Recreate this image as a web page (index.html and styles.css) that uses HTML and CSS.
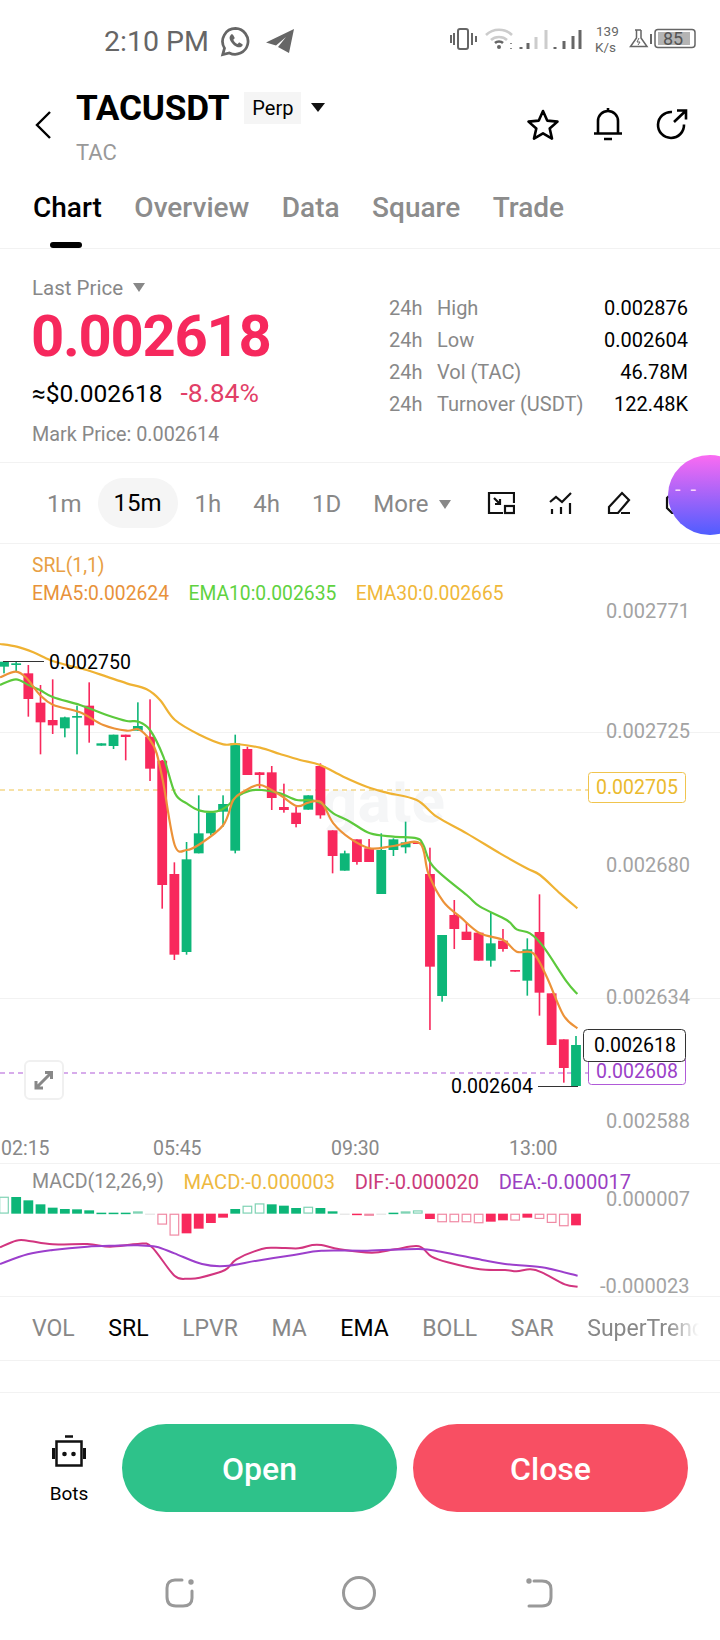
FILE: index.html
```html
<!DOCTYPE html>
<html lang="en">
<head>
  <meta charset="UTF-8">
  <meta name="viewport" content="width=device-width, initial-scale=1.0">
  <title>TACUSDT</title>
  <link rel="stylesheet" href="styles.css">
</head>
<body>
<div class="page">
  <div class="status-bar">
    <span class="clock">2:10 PM</span>
    <svg class="icon-whatsapp" viewBox="0 0 24 24" fill="none">
      <path d="M12 2.5a9.4 9.4 0 0 0-8 14.3L2.7 21.5l4.8-1.2A9.4 9.4 0 1 0 12 2.5z" stroke="#666" stroke-width="2"/>
      <path d="M8.6 7.2c-.7.6-1.1 1.6-.8 2.9.6 2.4 3.5 5.4 5.9 6 1.4.4 2.5 0 3.2-.8.4-.4.4-1 .1-1.3l-1.8-1.1c-.3-.2-.7-.1-1 .2l-.6.8c-1.3-.5-2.6-1.8-3.2-3.2l.7-.7c.3-.3.4-.6.2-1l-1-1.8c-.3-.5-1.100-.5-1.700-.1z" fill="#666"/>
    </svg>
    <svg class="icon-telegram" viewBox="0 0 28 24"><path d="M28 0L0 13.5l10 3L20 8l-8 10 11 6z" fill="#666"/></svg>
    <svg class="status-right" viewBox="440 20 270 45" fill="none" stroke="#666">
      <rect x="458" y="30" width="10" height="20" rx="2" stroke-width="2"/>
      <path d="M451 36v8M454 34v12M472 34v12M476 37v6" stroke-width="2"/>
      <path d="M486 36c7-7 19-7 26 0" stroke="#ccc" stroke-width="2.5"/>
      <path d="M491 41c4-4 12-4 16 0" stroke="#ccc" stroke-width="2.5"/>
      <path d="M495 44c2-2 6-2 8 0" stroke-width="2.5"/>
      <circle cx="499" cy="48" r="2" fill="#666" stroke="none"/>
      <path d="M511 44v1M511 49v1" stroke-width="1.5"/>
      <path d="M521 48v2M528 44v6" stroke-width="3"/>
      <path d="M536 38v12M546 31v19" stroke="#ccc" stroke-width="3"/>
      <path d="M555 48v2M564 42v8M573 37v13M580 31v19" stroke-width="3"/>
      <text class="speed" x="596" y="37">139</text>
      <text class="speed" x="595" y="53">K/s</text>
      <path d="M635 31h6M636.5 31v8L630.500 47.500h16.500L641 39v-8" stroke-width="1.500"/>
      <path d="M639 39l-2 4h3l-2 3" stroke-width="1"/>
      <path d="M651 35v10" stroke-width="2"/>
      <rect x="655" y="30.500" width="40" height="18" rx="3" stroke-width="1.500"/>
      <rect x="658" y="33" width="32" height="13" fill="#b4b4b4" stroke="none"/>
      <text class="battery" x="663" y="46">85</text>
    </svg>
  </div>

  <header class="top-bar">
    <svg class="icon-back" viewBox="0 0 18 30" fill="none"><path d="M16 2L3 15l13 13" stroke="#000" stroke-width="2.400"/></svg>
    <div class="title-block">
      <div class="title-row">
        <span class="pair">TACUSDT</span>
        <span class="perp">Perp</span>
        <span class="caret caret-dark"></span>
      </div>
      <div class="base-coin">TAC</div>
    </div>
    <div class="top-actions">
      <svg class="icon-star" viewBox="0 0 34 33" fill="none"><path d="M17 3l4.200 9.600 10.300 1-7.800 6.900 2.300 10.100L17 25.300 8 30.600l2.300-10.100-7.800-6.900 10.300-1z" stroke="#000" stroke-width="2.600" stroke-linejoin="round"/></svg>
      <svg class="icon-bell" viewBox="0 0 30 34" fill="none"><path d="M1 26.500h28M5 26.500V14a10 10 0 0 1 20 0v12.500M15 1v3M11 32h8" stroke="#000" stroke-width="2.600"/></svg>
      <svg class="icon-share" viewBox="0 0 32 31" fill="none"><path d="M28 15.500A13 13 0 1 1 16 3M18 13L29.500 2M21 1.500h9v9" stroke="#000" stroke-width="2.600"/></svg>
    </div>
  </header>

  <nav class="tabs">
    <span class="tab tab-active">Chart</span>
    <span class="tab">Overview</span>
    <span class="tab">Data</span>
    <span class="tab">Square</span>
    <span class="tab">Trade</span>
  </nav>

  <section class="price-panel">
    <div class="price-left">
      <div class="price-label">Last Price <span class="caret caret-grey"></span></div>
      <div class="price-big">0.002618</div>
      <div class="price-sub"><span>≈$0.002618</span><span class="change">-8.84%</span></div>
      <div class="mark-price">Mark Price: 0.002614</div>
    </div>
    <div class="stats">
      <div class="stat-row"><span class="stat-period">24h</span><span>High</span><b>0.002876</b></div>
      <div class="stat-row"><span class="stat-period">24h</span><span>Low</span><b>0.002604</b></div>
      <div class="stat-row"><span class="stat-period">24h</span><span>Vol (TAC)</span><b>46.78M</b></div>
      <div class="stat-row"><span class="stat-period">24h</span><span>Turnover (USDT)</span><b>122.48K</b></div>
    </div>
  </section>

  <div class="interval-bar">
    <span class="interval">1m</span>
    <span class="interval interval-active">15m</span>
    <span class="interval">1h</span>
    <span class="interval">4h</span>
    <span class="interval">1D</span>
    <span class="interval">More <span class="caret caret-grey"></span></span>
    <div class="tool-icons">
      <svg class="tool" viewBox="0 0 28 24" fill="none" stroke="#111" stroke-width="2.200"><path d="M27 12V2H2v20h14"/><rect x="18" y="15" width="9" height="7"/><path d="M7 7l6 6M13 8v5H8"/></svg>
      <svg class="tool" viewBox="0 0 24 24" fill="none" stroke="#111" stroke-width="2.200"><path d="M1 11l6-5 6 5 9-9M3 18v5M12 16v7M21 12v11"/></svg>
      <svg class="tool" viewBox="0 0 24 24" fill="none" stroke="#111" stroke-width="2.200"><path d="M2 16L15 2l7 7-11 13H2zM14 22h9"/></svg>
      <svg class="tool" viewBox="0 0 24 24" fill="none" stroke="#111" stroke-width="2.200"><path d="M7 2l-5 5v10l5 5h10l5-5V7l-5-5z"/></svg>
    </div>
  </div>
  <div class="float-ball">- -</div>

  <section class="chart-panel">
    <div class="legend">
      <div class="legend-srl">SRL(1,1)</div>
      <div class="legend-row">
        <span class="ema5">EMA5:0.002624</span>
        <span class="ema10">EMA10:0.002635</span>
        <span class="ema30">EMA30:0.002665</span>
      </div>
    </div>
    <svg id="kline" class="chart-svg" viewBox="0 544 720 619"></svg>
  </section>

  <section class="macd-panel">
    <div class="macd-legend">
      <span class="macd-name">MACD(12,26,9)</span>
      <span class="macd-val">MACD:-0.000003</span>
      <span class="dif-val">DIF:-0.000020</span>
      <span class="dea-val">DEA:-0.000017</span>
    </div>
    <svg id="macd" class="chart-svg" viewBox="0 1164 720 132"></svg>
  </section>

  <div class="indicators">
    <span>VOL</span>
    <span class="on">SRL</span>
    <span>LPVR</span>
    <span>MA</span>
    <span class="on">EMA</span>
    <span>BOLL</span>
    <span>SAR</span>
    <span class="fade">SuperTrend</span>
  </div>
  <div class="spacer"></div>

  <div class="actions">
    <div class="bots">
      <svg class="icon-bots" viewBox="0 0 34 32"><path d="M13 1.500h8" stroke="#111" stroke-width="2.500"/><rect x="4.500" y="6.500" width="25" height="24" fill="none" stroke="#111" stroke-width="2.500"/><path d="M1.500 13v11M32.500 13v11" stroke="#111" stroke-width="3"/><circle cx="12.500" cy="19" r="2.300" fill="#111"/><circle cx="21.500" cy="19" r="2.300" fill="#111"/></svg>
      <span>Bots</span>
    </div>
    <div class="btn btn-open">Open</div>
    <div class="btn btn-close">Close</div>
  </div>

  <div class="nav-bar">
    <svg class="nav-icon" viewBox="0 0 32 32" fill="none" stroke="#999" stroke-width="3" stroke-linecap="round"><path d="M18 3h-7C6 3 3 6 3 11v9c0 6 3 9 9 9h7c6 0 9-3 9-8v-7"/><circle cx="27" cy="5" r="1.200" fill="#999"/></svg>
    <svg class="nav-icon" viewBox="0 0 36 36" fill="none" stroke="#999" stroke-width="3"><circle cx="18" cy="18" r="15.500"/></svg>
    <svg class="nav-icon" viewBox="0 0 32 32" fill="none" stroke="#999" stroke-width="3" stroke-linecap="round"><path d="M12 4h8c6 0 9 3 9 8v8c0 6-3 9-9 9H7"/><circle cx="7" cy="4" r="1.200" fill="#999"/></svg>
  </div>
</div>
<script src="chart.js"></script>
</body>
</html>
```

FILE: styles.css
```css
* {
  box-sizing: border-box;
}
body {
  margin: 0;
  background: #fff;
  font-family: Roboto, "Liberation Sans", sans-serif;
  color: #000;
}
.page {
  position: relative;
  width: 720px;
  height: 1640px;
  overflow: hidden;
}

/* status bar */
.status-bar {
  position: relative;
  display: flex;
  align-items: center;
  height: 82px;
  padding-left: 104px;
}
.clock {
  font-size: 28.500px;
  color: #666;
}
.icon-whatsapp {
  width: 33px;
  height: 33px;
  margin-left: 10px;
}
.icon-telegram {
  width: 28px;
  height: 24px;
  margin-left: 14px;
}
.status-right {
  width: 270px;
  height: 45px;
  margin-left: auto;
  margin-right: 10px;
}
.speed {
  font-size: 13.500px;
  fill: #666;
  stroke: none;
}
.battery {
  font-size: 18px;
  fill: #555;
  stroke: none;
}

/* header */
.top-bar {
  display: flex;
  height: 104px;
  padding-left: 34px;
}
.icon-back {
  width: 18px;
  height: 30px;
  margin-top: 28px;
}
.title-block {
  margin-left: 24px;
}
.title-row {
  display: flex;
  align-items: center;
  height: 51px;
}
.pair {
  font-size: 35.200px;
  font-weight: 700;
  letter-spacing: -0.2px;
}
.perp {
  margin-left: 15px;
  padding: 0 8px;
  height: 32px;
  line-height: 32px;
  font-size: 20px;
  background: #f5f5f5;
}
.caret {
  display: inline-block;
  width: 0;
  height: 0;
  border-left: 6px solid transparent;
  border-right: 6px solid transparent;
  border-top: 9px solid #888;
}
.caret-dark {
  margin-left: 10px;
  border-left-width: 7px;
  border-right-width: 7px;
  border-top-color: #111;
}
.caret-grey {
  margin-left: 5px;
  vertical-align: 3px;
}
.base-coin {
  margin-top: 6px;
  font-size: 22px;
  line-height: 28px;
  color: #999;
}
.top-actions {
  display: flex;
  align-items: center;
  margin-left: auto;
  margin-right: 32px;
  margin-top: 8px;
  height: 68px;
}
.icon-star {
  width: 34px;
  height: 33px;
}
.icon-bell {
  width: 30px;
  height: 34px;
  margin-left: 33px;
}
.icon-share {
  width: 32px;
  height: 31px;
  margin-left: 33px;
}

/* tabs */
.tabs {
  display: flex;
  gap: 32.500px;
  height: 63px;
  padding: 2px 0 0 33px;
  border-bottom: 1px solid #f2f2f2;
  font-size: 28px;
  font-weight: 500;
  line-height: 40px;
  color: #8c8c8c;
}
.tab {
  position: relative;
}
.tab-active {
  color: #000;
}
.tab-active::after {
  content: "";
  position: absolute;
  left: 17px;
  top: 54px;
  width: 32px;
  height: 6px;
  border-radius: 3px;
  background: #000;
}

/* price block */
.price-panel {
  display: flex;
  justify-content: space-between;
  height: 214px;
  padding: 27px 32px 0;
  border-bottom: 1px solid #f2f2f2;
}
.price-label {
  font-size: 20.500px;
  line-height: 24px;
  color: #888;
}
.price-big {
  margin: 6px 0 0 -1px;
  font-size: 58px;
  font-weight: 700;
  letter-spacing: -1.300px;
  line-height: 60px;
  color: #f6285d;
}
.price-sub {
  display: flex;
  align-items: baseline;
  gap: 18px;
  margin-top: 13px;
  font-size: 24.500px;
  line-height: 28px;
}
.change {
  font-size: 26.500px;
  color: #e23f68;
}
.mark-price {
  margin-top: 15px;
  font-size: 19.800px;
  line-height: 24px;
  color: #888;
}
.stats {
  width: 299px;
  padding-top: 16px;
  font-size: 20px;
  color: #888;
}
.stat-row {
  display: flex;
  height: 32px;
  line-height: 32px;
}
.stat-period {
  width: 48px;
}
.stat-row b {
  margin-left: auto;
  font-weight: 400;
  color: #000;
}

/* intervals */
.interval-bar {
  display: flex;
  align-items: center;
  height: 81px;
  padding-left: 31px;
  border-bottom: 1px solid #f2f2f2;
  font-size: 24px;
  color: #888;
}
.interval {
  padding: 1px 16px 0;
  white-space: nowrap;
}
.interval-active {
  width: 80px;
  margin-right: 1px;
  padding: 0;
  height: 50px;
  line-height: 50px;
  border-radius: 25px;
  background: #f5f5f5;
  color: #000;
  text-align: center;
}
.tool-icons {
  display: flex;
  gap: 34px;
  margin-left: 20px;
  flex: none;
}
.tool {
  height: 24px;
  width: 24px;
}
.tool:first-child {
  width: 28px;
}
.float-ball {
  position: absolute;
  left: 668px;
  top: 455px;
  width: 84px;
  height: 80px;
  padding: 22px 0 0 7px;
  border-radius: 50%;
  background: linear-gradient(#fb6bf2, #4f5dff);
  color: #fbd6fb;
  font-size: 20px;
  word-spacing: 5px;
}

/* chart */
.chart-panel {
  position: relative;
  height: 620px;
  border-bottom: 1px solid #f2f2f2;
}
.chart-svg {
  display: block;
  width: 720px;
  height: 100%;
  overflow: visible;
}
.legend {
  position: absolute;
  left: 32px;
  top: 8px;
  font-size: 19.300px;
  line-height: 28px;
}
.legend-srl {
  color: #e8a044;
}
.legend-row {
  display: flex;
  gap: 19.500px;
}
.ema5 {
  color: #e8923a;
}
.ema10 {
  color: #5fd23f;
}
.ema30 {
  color: #f0b83a;
}
.axis-text {
  font-size: 20px;
  fill: #a3a3a3;
}
.time-text {
  font-size: 19.500px;
  fill: #888;
}
.mark-text {
  font-size: 19.500px;
  fill: #000;
}
.water-text {
  font-size: 62px;
  font-weight: 700;
  fill: #f5f6f7;
}

/* macd */
.macd-panel {
  position: relative;
  height: 133px;
  border-bottom: 1px solid #f2f2f2;
}
.macd-legend {
  position: absolute;
  left: 32px;
  top: 4px;
  display: flex;
  gap: 19.500px;
  font-size: 20.100px;
  line-height: 28px;
  white-space: nowrap;
}
.macd-name {
  font-size: 19.600px;
  color: #8c8c8c;
}
.macd-val {
  color: #eeb93f;
}
.dif-val {
  color: #cb3a7a;
}
.dea-val {
  color: #9b3fc2;
}

/* indicators */
.indicators {
  display: flex;
  align-items: center;
  gap: 33.600px;
  height: 64px;
  padding-left: 32px;
  border-bottom: 1px solid #f2f2f2;
  font-size: 23px;
  color: #888;
  white-space: nowrap;
}
.indicators .on {
  color: #000;
}
.fade {
  -webkit-mask-image: linear-gradient(to right, #000 68%, transparent 95%);
  mask-image: linear-gradient(to right, #000 68%, transparent 95%);
}
.spacer {
  height: 32px;
  border-bottom: 1px solid #f2f2f2;
}

/* bottom buttons */
.actions {
  display: flex;
  align-items: flex-start;
  gap: 16px;
  padding: 31px 32px 0 0;
}
.bots {
  display: flex;
  flex-direction: column;
  align-items: center;
  width: 122px;
  margin-right: -16px;
  padding: 11px 0 0 16px;
  font-size: 19px;
  line-height: 24px;
}
.icon-bots {
  width: 34px;
  height: 32px;
  margin-bottom: 15px;
}
.btn {
  flex: 1;
  height: 88px;
  border-radius: 44px;
  color: #fff;
  font-size: 32px;
  font-weight: 500;
  line-height: 91px;
  text-align: center;
}
.btn-open {
  background: #2ec28a;
}
.btn-close {
  background: #f84f63;
}
.nav-bar {
  display: flex;
  justify-content: space-between;
  align-items: center;
  width: 390px;
  height: 36px;
  margin: 63px 0 0 164px;
}
.nav-icon {
  width: 32px;
  height: 32px;
}
.nav-icon:nth-child(2) {
  width: 36px;
  height: 36px;
}
```

FILE: chart.js
```js
// values read off the chart, in 1/3 pixel units from two origin rows
const NS = 'http://www.w3.org/2000/svg';
const RED = '#f8285c';
const GREEN = '#0db678';

function add(svg, tag, attrs, text) {
  const el = document.createElementNS(NS, tag);
  for (const k in attrs) el.setAttribute(k, attrs[k]);
  if (text) el.textContent = text;
  svg.appendChild(el);
  return el;
}

// [wickTop, bodyTop, bodyBottom, wickBottom, isRed]
const leftCandles = [
  [125, 125, 140, 160, 0], [125, 130, 135, 155, 0], [135, 160, 237, 290, 1], [195, 248, 307, 403, 1],
  [178, 300, 316, 342, 1], [290, 292, 325, 352, 0], [257, 288, 293, 403, 0], [187, 257, 316, 368, 1],
  [370, 370, 377, 377, 0], [344, 344, 378, 387, 0], [344, 344, 351, 421, 1], [247, 318, 332, 332, 0],
  [238, 350, 446, 483, 1], [420, 422, 795, 866, 1], [727, 762, 1004, 1020, 1], [666, 718, 996, 1004, 0],
  [526, 640, 700, 700, 0], [578, 578, 640, 645, 0], [526, 552, 575, 620, 0], [344, 370, 692, 700, 0],
  [380, 387, 465, 465, 1], [456, 457, 465, 505, 1], [438, 457, 534, 570, 1], [491, 561, 570, 578, 1],
  [560, 578, 612, 622, 1], [526, 526, 569, 569, 0]
];
const rightCandles = [
  [70, 78, 226, 236, 1], [271, 271, 348, 400, 1], [332, 340, 392, 392, 0], [298, 298, 366, 374, 1],
  [297, 325, 366, 366, 1], [280, 330, 462, 462, 0], [295, 298, 330, 348, 0], [245, 307, 322, 340, 0],
  [307, 307, 312, 312, 1], [323, 402, 680, 870, 1], [585, 585, 768, 785, 0], [480, 525, 567, 627, 1],
  [548, 575, 600, 600, 1], [578, 578, 662, 662, 1], [517, 610, 662, 680, 0], [567, 602, 627, 635, 1],
  [690, 690, 695, 695, 1], [595, 628, 722, 767, 0], [463, 576, 758, 827, 1], [760, 760, 915, 915, 1],
  [898, 898, 984, 1028, 1], [888, 915, 1038, 1038, 0]
];

const ema30 = [[[0,72],[50,80],[100,97],[150,120],[200,135],[260,150],[320,170],[380,190],[440,208],[480,240],[525,300],[600,345],[670,373],[710,372],[780,383],[840,402]],
  [[0,60],[60,75],[130,110],[200,140],[260,158],[350,180],[410,230],[500,280],[600,340],[680,385],[720,405],[780,460],[832,505]]];
const ema10 = [[[0,195],[48,178],[85,195],[120,210],[160,232],[240,255],[320,285],[380,303],[415,305],[450,330],[490,410],[525,520],[560,550],[600,572],[650,574],[680,560],[710,530],[750,512],[785,510],[840,520]],
  [[-10,180],[30,180],[64,190],[100,220],[150,245],[210,280],[280,290],[350,295],[370,315],[400,380],[500,465],[540,500],[620,540],[650,568],[690,580],[730,620],[800,725],[832,762]]];
const ema5 = [[[0,172],[48,155],[80,175],[120,225],[160,255],[240,277],[310,315],[380,332],[415,328],[450,360],[470,400],[490,490],[524,675],[560,690],[600,672],[670,615],[700,540],[730,515],[780,495],[840,525]],
  [[-10,198],[25,188],[64,187],[100,250],[150,295],[210,325],[280,318],[360,310],[385,400],[430,485],[480,530],[540,580],[610,600],[650,635],[700,640],[740,710],[790,825],[832,865]]];

function toPoints(parts) {
  const a = parts[0].map(p => [p[0] / 3, 620 + p[1] / 3]);
  const b = parts[1].map(p => [300 + p[0] / 3, 740 + p[1] / 3]);
  return a.concat(b);
}

// catmull-rom through the points so the averages don't look faceted
function smooth(pts) {
  let d = 'M' + pts[0][0] + ' ' + pts[0][1];
  for (let i = 0; i < pts.length - 1; i++) {
    const p0 = pts[i - 1] || pts[i];
    const p1 = pts[i];
    const p2 = pts[i + 1];
    const p3 = pts[i + 2] || p2;
    d += ' C' + (p1[0] + (p2[0] - p0[0]) / 6) + ' ' + (p1[1] + (p2[1] - p0[1]) / 6) +
      ' ' + (p2[0] - (p3[0] - p1[0]) / 6) + ' ' + (p2[1] - (p3[1] - p1[1]) / 6) +
      ' ' + p2[0] + ' ' + p2[1];
  }
  return d;
}

function drawCandle(svg, i, c, base) {
  const x = 4 + i * 12.17;
  const color = c[4] ? RED : GREEN;
  add(svg, 'rect', { x: x - 0.8, y: base + c[0] / 3, width: 1.6, height: (c[3] - c[0]) / 3, fill: color });
  add(svg, 'rect', { x: x - 4.9, y: base + c[1] / 3, width: 9.8, height: Math.max(c[2] - c[1], 5) / 3, fill: color });
}

const kline = document.getElementById('kline');

// grid
add(kline, 'path', { d: 'M0 732.500H720M0 998.500H720', stroke: '#f2f2f2', 'stroke-width': 1 });
add(kline, 'text', { x: 322, y: 822, class: 'water-text' }, 'gate');

// last-price guides
add(kline, 'path', { d: 'M0 790H588', stroke: '#f0c44e', 'stroke-width': 1.200, 'stroke-dasharray': '5 4' });
add(kline, 'path', { d: 'M0 1073H588', stroke: '#b05ad8', 'stroke-width': 1.200, 'stroke-dasharray': '5 4' });

leftCandles.forEach((c, i) => drawCandle(kline, i, c, 620));
rightCandles.forEach((c, i) => drawCandle(kline, i + 26, c, 740));

[[ema30, '#efb233'], [ema10, '#5cc93c'], [ema5, '#ec9238']].forEach(l => {
  add(kline, 'path', { d: smooth(toPoints(l[0])), fill: 'none', stroke: l[1], 'stroke-width': 2.200 });
});

// y axis
[['0.002771', 618], ['0.002725', 738], ['0.002680', 872], ['0.002634', 1004], ['0.002588', 1128]].forEach(t => {
  add(kline, 'text', { x: 606, y: t[1], class: 'axis-text' }, t[0]);
});

// x axis
[['02:15', 1], ['05:45', 153], ['09:30', 331], ['13:00', 509]].forEach(t => {
  add(kline, 'text', { x: t[1], y: 1155, class: 'time-text' }, t[0]);
});

// high and low marks
add(kline, 'path', { d: 'M3 661.500H44M538 1086.500H578', stroke: '#333', 'stroke-width': 1 });
add(kline, 'text', { x: 49, y: 669, class: 'mark-text' }, '0.002750');
add(kline, 'text', { x: 451, y: 1093, class: 'mark-text' }, '0.002604');

// price tags
add(kline, 'rect', { x: 588.500, y: 772.500, width: 97, height: 30, rx: 3, fill: '#fff', stroke: '#f0c44e' });
add(kline, 'text', { x: 596, y: 794, class: 'mark-text', style: 'fill:#ebba2e' }, '0.002705');
add(kline, 'rect', { x: 588.500, y: 1056.500, width: 97, height: 28, rx: 3, fill: '#fff', stroke: '#b05ad8' });
add(kline, 'text', { x: 596, y: 1078, class: 'mark-text', style: 'fill:#9b3fc8' }, '0.002608');
add(kline, 'rect', { x: 583.500, y: 1029.500, width: 102, height: 32, rx: 4, fill: '#fff', stroke: '#333' });
add(kline, 'text', { x: 594, y: 1052, class: 'mark-text' }, '0.002618');

// expand button
add(kline, 'rect', { x: 25, y: 1061, width: 38, height: 38, rx: 5, fill: '#fff', stroke: '#f0f0f0', 'stroke-width': 2 });
add(kline, 'path', { d: 'M37 1087L50 1074M45 1072.500h6.500v6.500M36 1081v7h7', fill: 'none', stroke: '#888', 'stroke-width': 3 });

// macd histogram: y of the far edge in 1/3 pixel units, negative = hollow, 0 = flat
const macdBars = [-140, 141, 151, 163, 173, 177, 178, 181, 188, 188, 188, -184, 0, -224, -257, 250, 236, 219, 203,
  177, -167, -160, 163, 167, 174, -170, 174, 184, 0, 194, -197, 0, 188, -184, -181,
  207, -217, -217, -217, -220, 215, 211, -212, 203, -207, -219, -229, 226];
const macd = document.getElementById('macd');
const ZERO = 191;
macdBars.forEach((v, i) => {
  const x = 4 + i * 12.17 - 4.9;
  if (!v) {
    add(macd, 'rect', { x: x, y: 1150 + ZERO / 3, width: 9.8, height: 1, fill: '#ddd' });
    return;
  }
  const edge = Math.abs(v);
  const up = edge < ZERO;
  const y = 1150 + Math.min(edge, ZERO) / 3;
  const h = Math.abs(edge - ZERO) / 3;
  const color = up ? GREEN : RED;
  if (v < 0) {
    add(macd, 'rect', { x: x + 0.6, y: y + 0.6, width: 8.6, height: Math.max(h - 1.2, 1), fill: 'none', stroke: up ? '#7fd3b4' : '#f08aa4', 'stroke-width': 1.200 });
  } else {
    add(macd, 'rect', { x: x, y: y, width: 9.8, height: Math.max(h, 1.500), fill: color });
  }
});

const dif = [[0,292],[35,272],[60,272],[115,283],[190,282],[240,290],[300,282],[330,290],[380,377],[410,386],[435,383],[490,360],[515,328],[570,297],[600,293],[650,295],[680,285],[700,285],[740,298],[810,308],[860,298],[912,289],[940,320],[975,337],[1045,358],[1100,360],[1125,364],[1155,358],[1180,367],[1230,403],[1258,410]];
const dea = [[0,342],[60,313],[115,300],[190,290],[250,287],[300,286],[340,290],[380,310],[440,342],[490,348],[560,332],[640,315],[700,302],[800,302],[912,297],[960,305],[1050,330],[1100,342],[1180,352],[1258,377]];
[[dif, '#d2357f'], [dea, '#9c3fcc']].forEach(l => {
  const pts = l[0].map(p => [p[0] / 2.178, 1150 + p[1] / 3]);
  add(macd, 'path', { d: smooth(pts), fill: 'none', stroke: l[1], 'stroke-width': 2 });
});
add(macd, 'text', { x: 606, y: 1206, class: 'axis-text' }, '0.000007');
add(macd, 'text', { x: 600, y: 1293, class: 'axis-text' }, '-0.000023');
```
